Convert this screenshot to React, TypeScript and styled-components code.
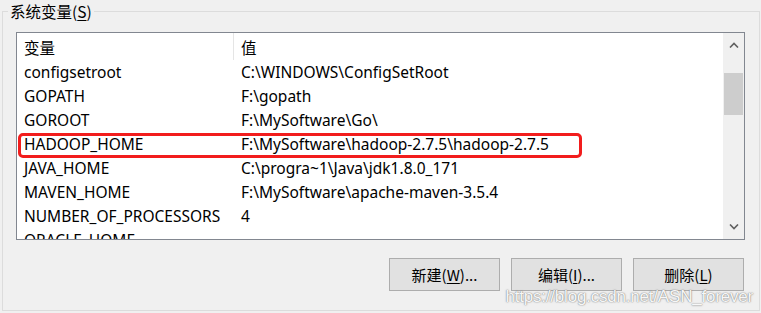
import React from 'react'
import styled, { createGlobalStyle } from 'styled-components'

const GlobalStyle = createGlobalStyle`
    html, body {
        margin: 0;
        padding: 0;
        background: #f0f0f0;
    }
    body {
        font-family: 'Noto Sans', 'Noto Sans CJK SC', sans-serif;
        color: #000;
        width: 761px;
        height: 313px;
        overflow: hidden;
    }
`

const Group = styled.div`
    position: relative;
    box-sizing: border-box;
    margin: 11px 0 0 2px;
    width: 758px;
    height: 300px;
    border: 1px solid #dcdcdc;
    padding: 20px 0 0 13px;
`

const Legend = styled.div`
    position: absolute;
    top: -12px;
    left: 5px;
    padding: 0 2px;
    background: #f0f0f0;
    font-size: 15.5px;
    line-height: 22px;
    font-family: 'Noto Sans CJK SC', 'Noto Sans', sans-serif;

    u {
        text-decoration-thickness: 1px;
        text-underline-offset: 2px;
    }
`

const ListBox = styled.div`
    box-sizing: border-box;
    width: 729px;
    height: 208px;
    border: 1px solid #828790;
    background: #fff;
    display: flex;
    overflow: hidden;
`

const Table = styled.div`
    flex: 1;
    display: flex;
    flex-direction: column;
    overflow: hidden;
`

const Row = styled.div<{ $head?: boolean }>`
    position: relative;
    flex: none;
    display: flex;
    height: ${(p) => (p.$head ? '27px' : '24px')};
    align-items: center;
`

const Cell = styled.div<{ $first?: boolean; $head?: boolean }>`
    box-sizing: border-box;
    height: 100%;
    display: flex;
    align-items: center;
    white-space: nowrap;
    width: ${(p) => (p.$first ? '217px' : 'auto')};
    flex: ${(p) => (p.$first ? 'none' : '1')};
    padding-left: 7px;
    border-right: ${(p) => (p.$head && p.$first ? '1px solid #e5e5e5' : 'none')};
    font-family: ${(p) => (p.$head ? "'Noto Sans CJK SC', sans-serif" : "'Noto Sans', sans-serif")};
    font-size: 15.5px;
`

const Marker = styled.div`
    position: absolute;
    left: 1px;
    top: 1px;
    width: 564px;
    height: 25px;
    box-sizing: border-box;
    border: 3px solid #f21d1d;
    border-radius: 5px;
    pointer-events: none;
`

const ScrollBar = styled.div`
    flex: none;
    width: 21px;
    background: #f0f0f0;
    display: flex;
    flex-direction: column;
    align-items: center;
    border-left: 1px solid #fff;
`

const Arrow = styled.div`
    height: 24px;
    width: 100%;
    display: flex;
    align-items: center;
    justify-content: center;
`

const Track = styled.div`
    flex: 1;
    width: 100%;
    padding-top: 16px;
    box-sizing: border-box;
`

const Thumb = styled.div`
    margin: 0 1px;
    height: 42px;
    background: #cdcdcd;
`

const Buttons = styled.div`
    width: 728px;
    display: flex;
    justify-content: flex-end;
    gap: 11px;
    margin-top: 18px;
`

const Button = styled.button`
    box-sizing: border-box;
    width: 111px;
    height: 33px;
    border: 1px solid #adadad;
    background: #e1e1e1;
    font-family: 'Noto Sans CJK SC', 'Noto Sans', sans-serif;
    font-size: 15px;
    color: #000;
    padding: 0;

    u {
        text-decoration-thickness: 1px;
        text-underline-offset: 2px;
    }
`

const Watermark = styled.div`
    position: absolute;
    right: 6px;
    bottom: 3px;
    font-family: 'Liberation Sans', Arial, sans-serif;
    font-size: 17px;
    letter-spacing: -0.2px;
    color: rgba(255, 255, 255, 0.95);
    text-shadow: 0 0 1px rgba(110, 110, 110, 0.95), 0 0 2px rgba(140, 140, 140, 0.7);
    pointer-events: none;
`

const vars: [string, string][] = [
    ['configsetroot', 'C:\\WINDOWS\\ConfigSetRoot'],
    ['GOPATH', 'F:\\gopath'],
    ['GOROOT', 'F:\\MySoftware\\Go\\'],
    ['HADOOP_HOME', 'F:\\MySoftware\\hadoop-2.7.5\\hadoop-2.7.5'],
    ['JAVA_HOME', 'C:\\progra~1\\Java\\jdk1.8.0_171'],
    ['MAVEN_HOME', 'F:\\MySoftware\\apache-maven-3.5.4'],
    ['NUMBER_OF_PROCESSORS', '4'],
    ['ORACLE_HOME', ''],
]

const Chevron = ({ up }: { up?: boolean }) => (
    <svg width='10' height='6' viewBox='0 0 10 6'>
        <polyline
            points={up ? '1,5.5 5,1.5 9,5.5' : '1,0.5 5,4.5 9,0.5'}
            fill='none'
            stroke='#606060'
            strokeWidth='1.6'
        />
    </svg>
)

const App = () => {
    return (
        <>
            <GlobalStyle />
            <Group>
                <Legend>
                    系统变量(<u>S</u>)
                </Legend>
                <ListBox>
                    <Table>
                        <Row $head>
                            <Cell $first $head>
                                变量
                            </Cell>
                            <Cell $head>值</Cell>
                        </Row>
                        {vars.map(([name, value]) => (
                            <Row key={name}>
                                <Cell $first>{name}</Cell>
                                <Cell>{value}</Cell>
                                {name === 'HADOOP_HOME' && <Marker />}
                            </Row>
                        ))}
                    </Table>
                    <ScrollBar>
                        <Arrow>
                            <Chevron up />
                        </Arrow>
                        <Track>
                            <Thumb />
                        </Track>
                        <Arrow>
                            <Chevron />
                        </Arrow>
                    </ScrollBar>
                </ListBox>
                <Buttons>
                    <Button>
                        新建(<u>W</u>)...
                    </Button>
                    <Button>
                        编辑(<u>I</u>)...
                    </Button>
                    <Button>
                        删除(<u>L</u>)
                    </Button>
                </Buttons>
                <Watermark>https://blog.csdn.net/ASN_forever</Watermark>
            </Group>
        </>
    )
}

export default App
